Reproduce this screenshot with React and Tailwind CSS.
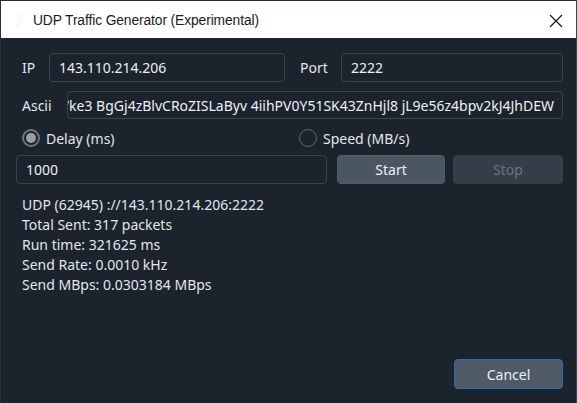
import React from "react";

const font = { fontFamily: '"Noto Sans", "Open Sans", sans-serif' };

function Radio({ checked, label }) {
  return (
    <div className="flex items-center">
      {checked ? (
        <div className="w-[18px] h-[18px] rounded-full border-[2px] border-[#6e7781] flex items-center justify-center">
          <div className="w-[10px] h-[10px] rounded-full bg-[#9c9fa3]" />
        </div>
      ) : (
        <div className="w-[18px] h-[18px] rounded-full border-[1.5px] border-[#5f6872]" />
      )}
      <span className="ml-[6px] text-[14px] text-[#e4e6e8]">{label}</span>
    </div>
  );
}

export default function App() {
  return (
    <div
      className="w-[577px] h-[403px] bg-[#1b232d] flex flex-col border-t border-[#202833] border-l border-l-[#2a2f36] border-r border-r-[#3a434c] overflow-hidden"
      style={font}
    >
      <div className="h-[37px] bg-white flex items-center shrink-0">
        <div className="w-[32px] flex justify-center">
          <div className="w-[1px] h-[14px] bg-[#ececec] rotate-[20deg] ml-[4px]" />
        </div>
        <span
          className="text-[13.8px] text-[#1a1a1a] mt-[3px] tracking-[-0.1px]"
          style={{ fontFamily: '"Liberation Sans", Arial, sans-serif' }}
        >
          UDP Traffic Generator (Experimental)
        </span>
        <div className="flex-1" />
        <svg width="14" height="14" viewBox="0 0 14 14" className="mr-[13px] mt-[2px]">
          <path d="M1 1 L13 13 M13 1 L1 13" stroke="#111" strokeWidth="1.1" fill="none" />
        </svg>
      </div>

      <div className="flex-1 flex flex-col pl-[15px] pr-[13px] text-[#e4e6e8] text-[14px]">
        <div className="flex items-center h-[29px] mt-[15px]">
          <div className="w-[33px] pl-[6px]">IP</div>
          <div className="w-[236px] h-[29px] rounded-[4px] border border-[#3a4450] flex items-center px-[9px] text-[#eef0f2]">
            143.110.214.206
          </div>
          <div className="w-[56px] pl-[15px]">Port</div>
          <div className="flex-1 h-[29px] rounded-[4px] border border-[#3a4450] flex items-center px-[9px] text-[#eef0f2]">
            2222
          </div>
        </div>

        <div className="flex items-center h-[28px] mt-[9px]">
          <div className="w-[51px] pl-[6px]">Ascii</div>
          <div className="flex-1 min-w-0 h-[28px] rounded-[4px] border border-[#3a4450] flex items-center justify-end px-[8px] overflow-hidden text-[#eef0f2]">
            <span className="whitespace-nowrap shrink-0">Wke3 BgGj4zBlvCRoZISLaByv 4iihPV0Y51SK43ZnHjl8 jL9e56z4bpv2kJ4JhDEW</span>
          </div>
        </div>

        <div className="flex items-center h-[24px] mt-[7px]">
          <div className="w-[283px] pl-[6px]">
            <Radio checked label="Delay (ms)" />
          </div>
          <Radio label="Speed (MB/s)" />
        </div>

        <div className="flex items-center h-[29px] mt-[5px]">
          <div className="w-[311px] h-[29px] rounded-[4px] border border-[#3a4450] flex items-center px-[9px] text-[#eef0f2]">
            1000
          </div>
          <div className="ml-[10px] w-[108px] h-[29px] rounded-[4px] bg-[#4a5662] border border-[#505c68] flex items-center justify-center text-[#eef0f2]">
            Start
          </div>
          <div className="ml-[8px] w-[110px] h-[29px] rounded-[4px] bg-[#333e49] flex items-center justify-center text-[#6a7480]">
            Stop
          </div>
        </div>

        <div className="mt-[11px] pl-[6px] flex flex-col text-[14px] leading-[20px] text-[#e4e6e8]">
          <div>UDP (62945) ://143.110.214.206:2222</div>
          <div>Total Sent: 317 packets</div>
          <div>Run time: 321625 ms</div>
          <div>Send Rate: 0.0010 kHz</div>
          <div>Send MBps: 0.0303184 MBps</div>
        </div>

        <div className="flex-1" />

        <div className="flex justify-end mb-[14px]">
          <div className="w-[109px] h-[30px] rounded-[4px] bg-[#4e5a66] border border-[#2a6db5] flex items-center justify-center text-[#eef0f2]">
            Cancel
          </div>
        </div>
      </div>
    </div>
  );
}
